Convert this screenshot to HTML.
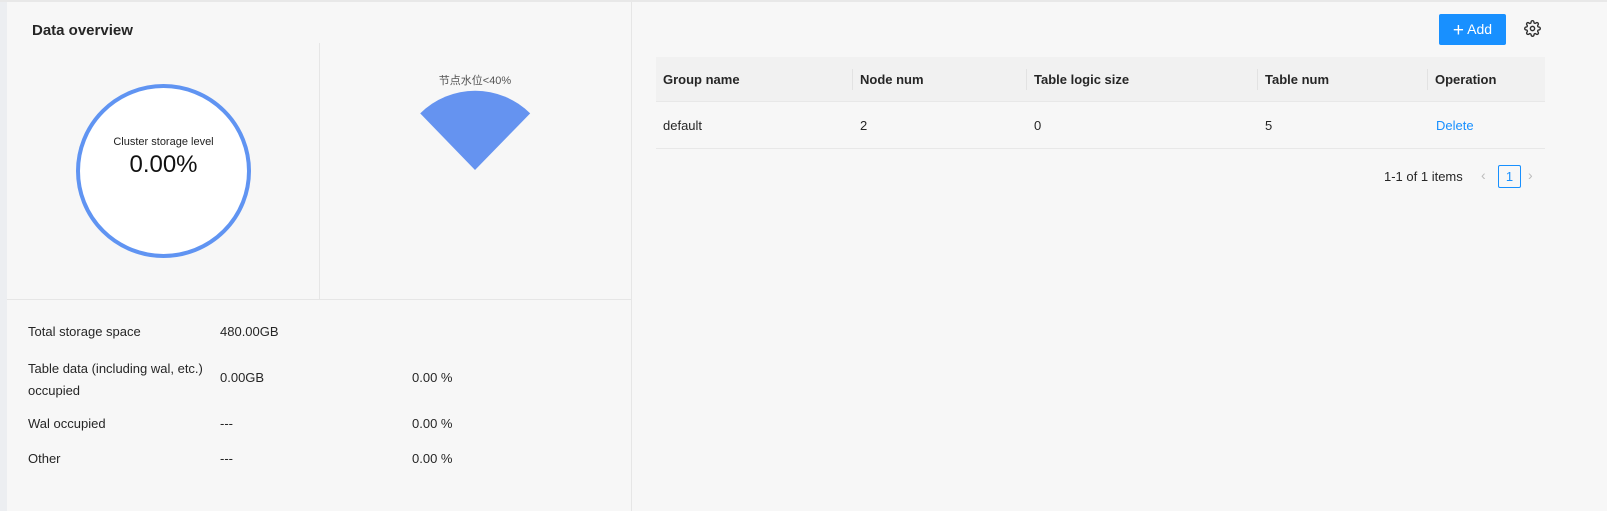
<!DOCTYPE html>
<html><head><meta charset="utf-8"><style>
*{margin:0;padding:0;box-sizing:border-box}
body{width:1607px;height:511px;background:#f7f7f7;font-family:"Liberation Sans","Noto Sans CJK SC",sans-serif;color:#262626;position:relative;overflow:hidden;font-size:13px}
.a{position:absolute;white-space:nowrap}
</style></head><body>
<div class="a" style="left:0;top:0;width:7px;height:511px;background:#eceef1"></div>
<div class="a" style="left:0;top:0;width:1607px;height:2px;background:#e8e8e8"></div>
<div class="a" style="left:631px;top:2px;width:1px;height:509px;background:#e6e6e6"></div>
<div class="a" style="left:7px;top:299px;width:624px;height:1px;background:#e6e6e6"></div>
<div class="a" style="left:319px;top:43px;width:1px;height:256px;background:#e6e6e6"></div>
<div class="a" style="left:32px;top:22px;font-size:15px;font-weight:bold;color:#262626">Data overview</div>
<svg class="a" style="left:0;top:0" width="640" height="300">
<ellipse cx="163.5" cy="171" rx="85.5" ry="85" fill="#fff" stroke="#6094f2" stroke-width="4"/>
<path d="M475 170 L420.2 113.4 A78 78 0 0 1 530.2 113.4 Z" fill="#6593f0"/>
</svg>
<div class="a" style="left:77px;top:136px;width:173px;text-align:center;font-size:11px;color:#222">Cluster storage level</div>
<div class="a" style="left:77px;top:151px;width:173px;text-align:center;font-size:24px;color:#111">0.00%</div>
<div class="a" style="left:400px;top:72px;width:150px;text-align:center;font-size:11px;color:#555">节点水位&lt;40%</div>
<div class="a" style="left:28px;top:324px">Total storage space</div>
<div class="a" style="left:220px;top:324px">480.00GB</div>
<div class="a" style="left:28px;top:358px;line-height:22px">Table data (including wal, etc.)<br>occupied</div>
<div class="a" style="left:220px;top:370px">0.00GB</div>
<div class="a" style="left:412px;top:370px">0.00 %</div>
<div class="a" style="left:28px;top:416px">Wal occupied</div>
<div class="a" style="left:220px;top:416px">---</div>
<div class="a" style="left:412px;top:416px">0.00 %</div>
<div class="a" style="left:28px;top:451px">Other</div>
<div class="a" style="left:220px;top:451px">---</div>
<div class="a" style="left:412px;top:451px">0.00 %</div>
<div class="a" style="left:1439px;top:14px;width:67px;height:31px;background:#1890ff;border-radius:2px;color:#fff;font-size:14px;line-height:31px;text-align:center"><span style="font-size:19px;vertical-align:-2px">+</span> Add</div>
<svg class="a" style="left:1524px;top:20px" width="17" height="17" viewBox="0 0 24 24" fill="none" stroke="#333" stroke-width="2" stroke-linecap="round" stroke-linejoin="round"><circle cx="12" cy="12" r="3"/><path d="M19.4 15a1.65 1.65 0 0 0 .33 1.82l.06.06a2 2 0 0 1-2.83 2.83l-.06-.06a1.65 1.65 0 0 0-1.82-.33 1.65 1.65 0 0 0-1 1.51V21a2 2 0 0 1-4 0v-.09A1.65 1.65 0 0 0 9 19.4a1.65 1.65 0 0 0-1.82.33l-.06.06a2 2 0 0 1-2.83-2.83l.06-.06A1.65 1.65 0 0 0 4.68 15a1.65 1.65 0 0 0-1.51-1H3a2 2 0 0 1 0-4h.09A1.65 1.65 0 0 0 4.6 9a1.65 1.65 0 0 0-.33-1.82l-.06-.06a2 2 0 0 1 2.83-2.83l.06.06A1.65 1.65 0 0 0 9 4.68a1.65 1.65 0 0 0 1-1.51V3a2 2 0 0 1 4 0v.09a1.65 1.65 0 0 0 1 1.51 1.65 1.65 0 0 0 1.82-.33l.06-.06a2 2 0 0 1 2.83 2.83l-.06.06A1.65 1.65 0 0 0 19.4 9a1.65 1.65 0 0 0 1.51 1H21a2 2 0 0 1 0 4h-.09a1.65 1.65 0 0 0-1.51 1z"/></svg>
<div class="a" style="left:656px;top:57px;width:889px;height:45px;background:#f1f1f1;border-bottom:1px solid #e8e8e8"></div>
<div class="a" style="left:656px;top:148px;width:889px;height:1px;background:#e8e8e8"></div>
<div class="a" style="left:852px;top:69px;width:1px;height:21px;background:#e2e2e2"></div>
<div class="a" style="left:1026px;top:69px;width:1px;height:21px;background:#e2e2e2"></div>
<div class="a" style="left:1257px;top:69px;width:1px;height:21px;background:#e2e2e2"></div>
<div class="a" style="left:1427px;top:69px;width:1px;height:21px;background:#e2e2e2"></div>
<div class="a" style="left:663px;top:72px;font-weight:bold">Group name</div>
<div class="a" style="left:860px;top:72px;font-weight:bold">Node num</div>
<div class="a" style="left:1034px;top:72px;font-weight:bold">Table logic size</div>
<div class="a" style="left:1265px;top:72px;font-weight:bold">Table num</div>
<div class="a" style="left:1435px;top:72px;font-weight:bold">Operation</div>
<div class="a" style="left:663px;top:118px">default</div>
<div class="a" style="left:860px;top:118px">2</div>
<div class="a" style="left:1034px;top:118px">0</div>
<div class="a" style="left:1265px;top:118px">5</div>
<div class="a" style="left:1436px;top:118px;color:#1890ff">Delete</div>
<div class="a" style="left:1384px;top:169px">1-1 of 1 items</div>
<div class="a" style="left:1481px;top:167px;color:#bbb;font-size:14px">‹</div>
<div class="a" style="left:1498px;top:165px;width:23px;height:23px;border:1px solid #1890ff;border-radius:2px;color:#1890ff;text-align:center;line-height:21px">1</div>
<div class="a" style="left:1528px;top:167px;color:#bbb;font-size:14px">›</div>
</body></html>
